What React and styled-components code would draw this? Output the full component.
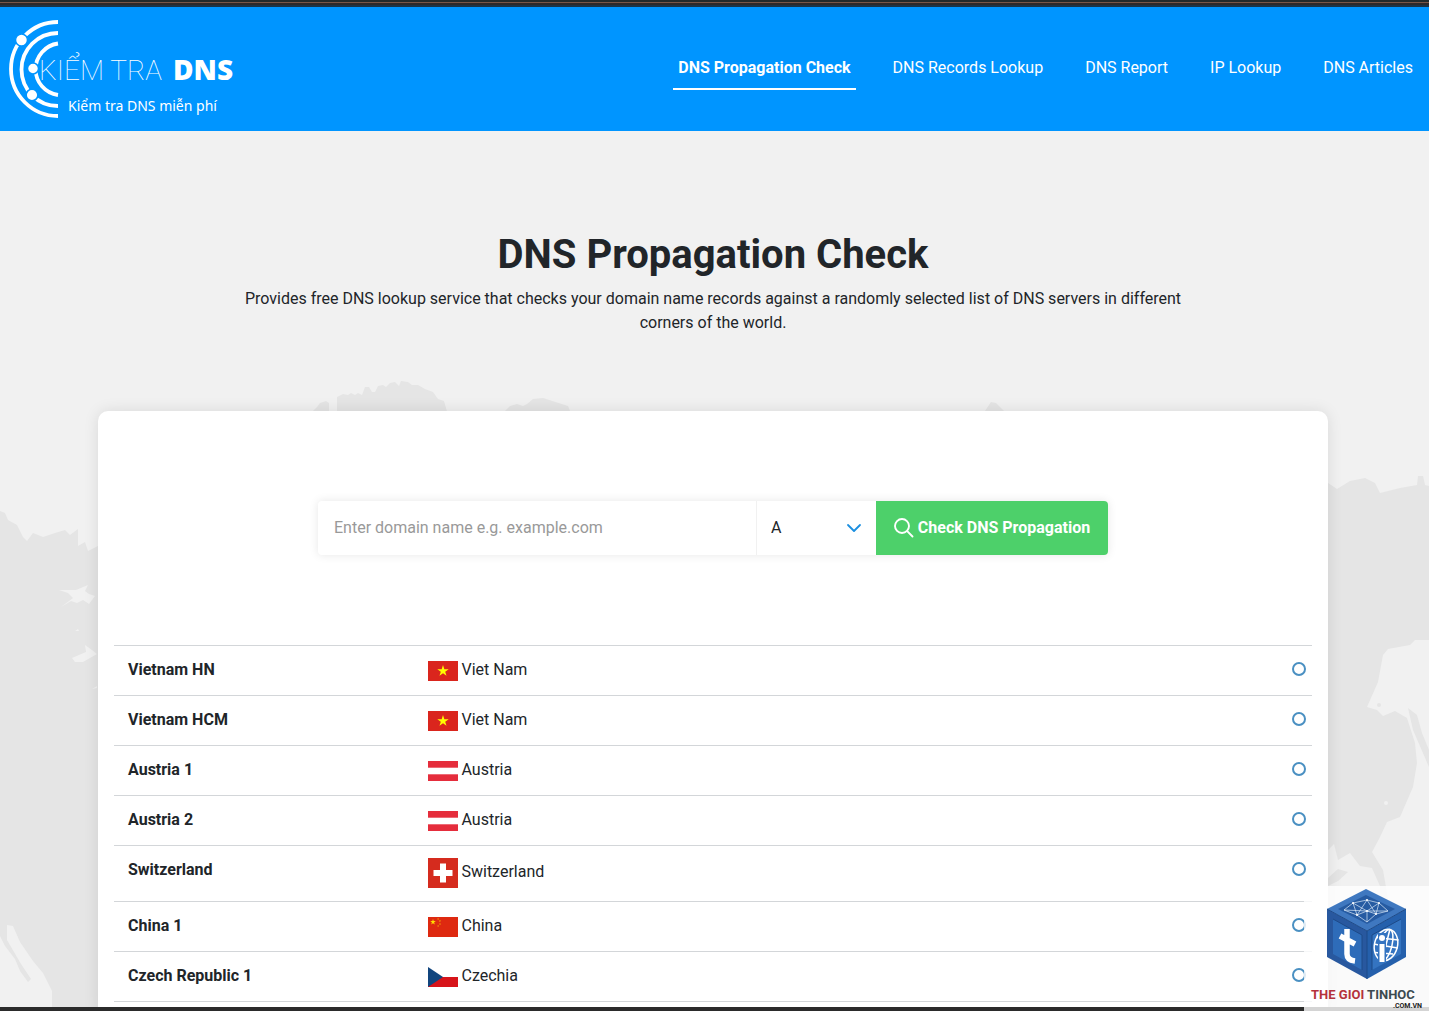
import React from "react";
import styled, { createGlobalStyle } from "styled-components";

const GlobalStyle = createGlobalStyle`
  *, *::before, *::after { box-sizing: border-box; }
  body {
    margin: 0;
    font-family: Roboto, "Liberation Sans", sans-serif;
    font-size: 16px;
    line-height: 24px;
    color: #212529;
    background: #f1f1f1;
  }
`;

const Page = styled.div`
  position: relative;
  display: flex;
  flex-direction: column;
  height: 100vh;
  overflow: hidden;
`;

const TopStrip = styled.div`
  flex: none;
  height: 7px;
  background: linear-gradient(#222a2d 0 2px, #79564a 2px 3px, #2d292b 3px 5px, #1c3347 5px 7px);
`;

const BottomStrip = styled.div`
  flex: none;
  height: 4px;
  background: #2b2b2b;
`;

const Header = styled.header`
  flex: none;
  display: flex;
  align-items: center;
  justify-content: space-between;
  height: 124px;
  padding: 0 11px 0 8px;
  background: #0095ff;
`;

const LogoLink = styled.a`
  display: block;
  svg { display: block; }
`;

const Nav = styled.nav`
  display: flex;
  gap: 32px;
`;

const NavLink = styled.a`
  padding: 8px 5px;
  border-bottom: 2px solid ${(p) => (p.$active ? "#fff" : "transparent")};
  color: #fff;
  font-weight: ${(p) => (p.$active ? 700 : 400)};
  text-decoration: none;
  white-space: nowrap;
`;

const Hero = styled.main`
  position: relative;
  flex: 1;
  min-height: 0;
  overflow: hidden;
  display: flex;
  flex-direction: column;
  align-items: center;
  padding: 100px 3px 0 0;
`;

const MapBackdrop = styled.svg`
  position: absolute;
  top: 0;
  left: 0;
  width: 100%;
  height: 100%;
`;

const Intro = styled.div`
  position: relative;
  max-width: 960px;
  margin-bottom: 76px;
  text-align: center;
`;

const Title = styled.h1`
  margin: 0 0 8px;
  font-size: 40px;
  line-height: 48px;
  font-weight: 700;
`;

const Lead = styled.p`
  margin: 0;
`;

const Card = styled.section`
  position: relative;
  flex: none;
  width: calc(100% - 196px);
  max-width: 1320px;
  padding: 90px 16px 16px;
  border-radius: 10px;
  background: #fff;
  box-shadow: 0 0 15px rgba(0, 0, 0, 0.1);
`;

const SearchForm = styled.form`
  display: flex;
  height: 54px;
  max-width: 790px;
  margin: 0 auto 90px;
  border-radius: 4px;
  background: #fff;
  box-shadow: 0 0 10px rgba(0, 0, 0, 0.1);
`;

const DomainInput = styled.input`
  flex: 1;
  min-width: 0;
  padding: 0 16px;
  border: 0;
  border-radius: 4px 0 0 4px;
  background: transparent;
  color: inherit;
  font: inherit;
  &::placeholder { color: #999; opacity: 1; }
`;

const TypePicker = styled.div`
  position: relative;
  width: 120px;
  border-left: 1px solid #f1f1f1;
  svg {
    position: absolute;
    top: 19px;
    right: 14px;
    pointer-events: none;
  }
`;

const TypeSelect = styled.select`
  width: 100%;
  height: 100%;
  padding: 0 14px;
  border: 0;
  appearance: none;
  background: transparent;
  color: inherit;
  font: inherit;
`;

const SubmitButton = styled.button`
  display: flex;
  align-items: center;
  justify-content: center;
  gap: 4px;
  width: 232px;
  padding: 0;
  border: 0;
  border-radius: 0 4px 4px 0;
  background: #4dd06a;
  color: #fff;
  font: inherit;
  font-weight: 700;
  white-space: nowrap;
`;

const ServerTable = styled.table`
  width: 100%;
  table-layout: fixed;
  border-collapse: collapse;
  border-bottom: 1px solid #d3d6d9;
  text-align: left;
`;

const ServerRow = styled.tr`
  border-top: 1px solid #d3d6d9;
`;

const NameCell = styled.th`
  width: 25%;
  padding: 12px 14px 13px;
  vertical-align: top;
  font-weight: 700;
`;

const CountryCell = styled.td`
  padding: 12px 14px 13px;
  vertical-align: top;
  svg { vertical-align: middle; }
`;

const StatusCell = styled.td`
  width: 80px;
  padding: 16px 6px 13px;
  vertical-align: top;
`;

const StatusRing = styled.span`
  display: block;
  width: 14px;
  height: 14px;
  margin-left: auto;
  border: 2px solid #4a90c2;
  border-radius: 50%;
`;

const Watermark = styled.div`
  position: absolute;
  right: 0;
  bottom: 0;
  width: 125px;
  height: 125px;
  background: rgba(255, 255, 255, 0.8);
  svg { display: block; }
`;

const navItems = ["DNS Propagation Check", "DNS Records Lookup", "DNS Report", "IP Lookup", "DNS Articles"];

const recordTypes = ["A", "AAAA", "CNAME", "MX", "NS", "TXT"];

const servers = [
  { name: "Vietnam HN", country: "Viet Nam", code: "vn" },
  { name: "Vietnam HCM", country: "Viet Nam", code: "vn" },
  { name: "Austria 1", country: "Austria", code: "at" },
  { name: "Austria 2", country: "Austria", code: "at" },
  { name: "Switzerland", country: "Switzerland", code: "ch" },
  { name: "China 1", country: "China", code: "cn" },
  { name: "Czech Republic 1", country: "Czechia", code: "cz" },
];

const STAR = "0,-10 2.25,-3.09 9.51,-3.09 3.63,1.18 5.88,8.09 0,3.82 -5.88,8.09 -3.63,1.18 -9.51,-3.09 -2.25,-3.09";

const flagArt = {
  vn: (
    <>
      <path fill="#da251d" d="M0 0h30v20H0z" />
      <polygon fill="#ff0" points={STAR} transform="translate(15 10) scale(.6)" />
    </>
  ),
  at: (
    <>
      <path fill="#e52d3c" d="M0 0h30v20H0z" />
      <path fill="#fff" d="M0 6.7h30v6.6H0z" />
    </>
  ),
  ch: (
    <>
      <path fill="#d52b1e" d="M0 0h30v30H0z" />
      <path fill="#fff" d="M12 5.5h6V12h6.5v6H18v6.500h-6V18H5.500v-6H12z" />
    </>
  ),
  cn: (
    <>
      <path fill="#de2910" d="M0 0h30v20H0z" />
      <g fill="#ffde00">
        <polygon points={STAR} transform="translate(5 5) scale(.3)" />
        <polygon points={STAR} transform="translate(10 2) scale(.1) rotate(23)" />
        <polygon points={STAR} transform="translate(12 4) scale(.1) rotate(45)" />
        <polygon points={STAR} transform="translate(12 7) scale(.1)" />
        <polygon points={STAR} transform="translate(10 9) scale(.1) rotate(20)" />
      </g>
    </>
  ),
  cz: (
    <>
      <path fill="#fff" d="M0 0h30v10H0z" />
      <path fill="#d7141a" d="M0 10h30v10H0z" />
      <path fill="#11457e" d="M0 0l15 10L0 20z" />
    </>
  ),
};

function Flag({ code }) {
  const height = code === "ch" ? 30 : 20;
  return (
    <svg width="30" height={height} viewBox={`0 0 30 ${height}`} aria-hidden="true">
      {flagArt[code]}
    </svg>
  );
}

function ChevronIcon() {
  return (
    <svg width="16" height="16" viewBox="0 0 16 16" fill="none" stroke="#1b8fe0" strokeWidth="1.800" strokeLinecap="round" strokeLinejoin="round" aria-hidden="true">
      <path d="M2 5l6 6 6-6" />
    </svg>
  );
}

function SearchIcon() {
  return (
    <svg width="20" height="20" viewBox="0 0 20 20" fill="none" stroke="#fff" strokeWidth="1.900" strokeLinecap="round" aria-hidden="true">
      <circle cx="8" cy="8" r="7" />
      <path d="M13.200 13.200L18.500 18.500" />
    </svg>
  );
}

function Logo() {
  return (
    <svg width="230" height="104" viewBox="8 17 230 104" role="img" aria-label="Kiểm tra DNS">
      <g fill="none" stroke="#fff" strokeWidth="3.800">
        <path d="M58 22a47 47 0 0 0 0 94" />
        <path d="M58 33a36 36 0 0 0 0 73" />
        <path d="M58 43.500a26 26 0 0 0 0 51.500" />
      </g>
      <g fill="#fff" stroke="#0095ff" strokeWidth="1.500">
        <circle cx="21.500" cy="40" r="6" />
        <circle cx="33" cy="68.500" r="5.500" />
        <circle cx="32" cy="95" r="5.800" />
      </g>
      <g fill="#fff">
        <text x="39" y="80" fontFamily="Roboto, sans-serif" fontWeight="100" fontSize="28">KIỂM TRA</text>
        <text x="173" y="80" fontFamily="'Open Sans', sans-serif" fontWeight="800" fontSize="28">DNS</text>
        <text x="68" y="111" fontFamily="'Noto Sans', sans-serif" fontSize="14">Kiểm tra DNS miễn phí</text>
      </g>
    </svg>
  );
}

function WorldMap() {
  return (
    <MapBackdrop viewBox="0 131 1429 876" preserveAspectRatio="xMidYMin slice" aria-hidden="true">
      <g fill="#e5e5e5">
        <path d="M0 511l5 2 3 7 9 5 6 12 4 4 6-8 10 4 12-4 10-3 5 5 8-6v17l7-4 3 9 10-5 82 0v461H0z" />
        <path d="M1300 483h28l9 6 13-8 15-3 10 5 5 10 20-5 17-3 1-9h5l2 9 4 1v521h-129z" />
        <path d="M313 411l4-4 3-4 6-2 3 2v8zM337 411v-14l6-3 5 1 3-2 4 2 3-2 4 2 3-8 4 0 3 5 3 0 3-6 5-1 3 2 4-4 5-1 4 4 2-5 7 1 4 3 6 0 7 4 8 3 5 7 6 2 4 14zM505 411l5-5 7-2 6 2 4-2 6-5 10-1 25 8 2 5v9h-65zM985 411l6-9 5 1 8 8z" />
      </g>
      <g fill="#f1f1f1">
        <path d="M59 590l17 0 12-5-3 6 4 3 6 2-6 8-6-4-6 3-6-2-10 6 12-9-5-5zM72 658l14-6-1-7 7 5 5 4-14 8-8 0zM75 631l3-2 1 2zM92 689l5-3v2zM0 936l5 10 10 13 5 12 8 11 3-3-10-15-14-24v-15l6 1 7 16 13 19 10 12 9 18 0 16H0z" />
        <path d="M1429 640h-14l-5 5-22 4-5 6-5 27-11 25 10 3 6 6 12-5 12 7 8 25 2 20-4 24-13 30-13 5-7 15-8 15 11 18 7 40h39zM1328 850l6-6 4 16 12-7 10 13 12 2 8 18v30h-52z" />
      </g>
      <g fill="#e5e5e5">
        <path d="M1408 708l9 7 5 18 7 17v17l-16-37zM1328 878l10-9 10 3-10 9-10 5z" />
        <circle cx="1379" cy="705" r="2" />
      </g>
      <circle cx="1386" cy="803" r="2" fill="#f1f1f1" />
    </MapBackdrop>
  );
}

function CubeLogo() {
  return (
    <svg width="125" height="125" viewBox="1304 886 125 125" role="img" aria-label="The Gioi Tinhoc .com.vn">
      <path fill="#3f78c0" d="M1366 889l40 20-39 22-40-22z" />
      <path fill="#28589f" d="M1327 909l40 22v48l-40-22z" />
      <path fill="#2560ac" d="M1367 931l39-22v48l-39 22z" />
      <path fill="#265ba2" d="M1366 895l29 14-28 15-29-15z" />
      <path fill="#2e6cb9" d="M1333 919l29 16v35l-29-16z" />
      <path fill="#3474c1" d="M1372 935l29-16v35l-29 16z" />
      <path fill="none" stroke="#1d4a88" d="M1327 909l40 22 39-22M1367 931v48M1333 919l29 16v35M1401 919l-29 16v35" />
      <g fill="none" stroke="#dbe9f8" strokeWidth=".7">
        <path d="M1344 910l9-7 14-3 12 3 9 8-12 3-9 8-10-7zM1353 903l4 12 10-15 9 14 3-11-12 8-14-8M1344 910l23 1 21 0M1357 915l10-4 9 3M1367 911v11" />
      </g>
      <g fill="#fff">
        <circle cx="1353" cy="903" r="1" />
        <circle cx="1367" cy="900" r="1" />
        <circle cx="1379" cy="903" r="1" />
        <circle cx="1367" cy="911" r="1" />
        <circle cx="1357" cy="915" r="1" />
        <circle cx="1376" cy="914" r="1" />
      </g>
      <path fill="none" stroke="#fff" strokeWidth="5.500" d="M1347 929v25q0 6 8 7M1340 936l15 8" />
      <g fill="none" stroke="#fff" strokeWidth="1.500" transform="rotate(14 1386 945)">
        <ellipse cx="1386" cy="945" rx="11.500" ry="16" />
        <ellipse cx="1386" cy="945" rx="6" ry="16" />
        <path d="M1386 929v32M1375 940l22-3M1375 947l23-2M1377 955l18-3" />
      </g>
      <path stroke="#3474c1" strokeWidth="8" d="M1382 933v30" />
      <path stroke="#fff" strokeWidth="5" d="M1382 944v18" />
      <circle cx="1382" cy="938" r="3" fill="#fff" />
      <text x="1311" y="999" fontFamily="Roboto, sans-serif" fontWeight="700" fontSize="13" fill="#b5323b">
        THE GIOI <tspan fill="#3c4a50">TINHOC</tspan>
      </text>
      <text x="1422" y="1008" textAnchor="end" fontFamily="Roboto, sans-serif" fontWeight="700" fontSize="7" fill="#222">
        .COM.VN
      </text>
    </svg>
  );
}

export default function App() {
  return (
    <Page>
      <GlobalStyle />
      <TopStrip />
      <Header>
        <LogoLink href="#home">
          <Logo />
        </LogoLink>
        <Nav aria-label="Main">
          {navItems.map((item, i) => (
            <NavLink key={item} href="#nav" $active={i === 0} aria-current={i === 0 ? "page" : undefined}>
              {item}
            </NavLink>
          ))}
        </Nav>
      </Header>
      <Hero>
        <WorldMap />
        <Intro>
          <Title>DNS Propagation Check</Title>
          <Lead>
            Provides free DNS lookup service that checks your domain name records against a randomly selected list of
            DNS servers in different corners of the world.
          </Lead>
        </Intro>
        <Card>
          <SearchForm onSubmit={(e) => e.preventDefault()}>
            <DomainInput type="text" aria-label="Domain name" placeholder="Enter domain name e.g. example.com" />
            <TypePicker>
              <TypeSelect aria-label="Record type" defaultValue="A">
                {recordTypes.map((type) => (
                  <option key={type}>{type}</option>
                ))}
              </TypeSelect>
              <ChevronIcon />
            </TypePicker>
            <SubmitButton type="submit">
              <SearchIcon />
              Check DNS Propagation
            </SubmitButton>
          </SearchForm>
          <ServerTable>
            <tbody>
              {servers.map((server) => (
                <ServerRow key={server.name}>
                  <NameCell scope="row">{server.name}</NameCell>
                  <CountryCell>
                    <Flag code={server.code} /> {server.country}
                  </CountryCell>
                  <StatusCell>
                    <StatusRing role="img" aria-label="Not checked" />
                  </StatusCell>
                </ServerRow>
              ))}
            </tbody>
          </ServerTable>
        </Card>
      </Hero>
      <BottomStrip />
      <Watermark>
        <CubeLogo />
      </Watermark>
    </Page>
  );
}
